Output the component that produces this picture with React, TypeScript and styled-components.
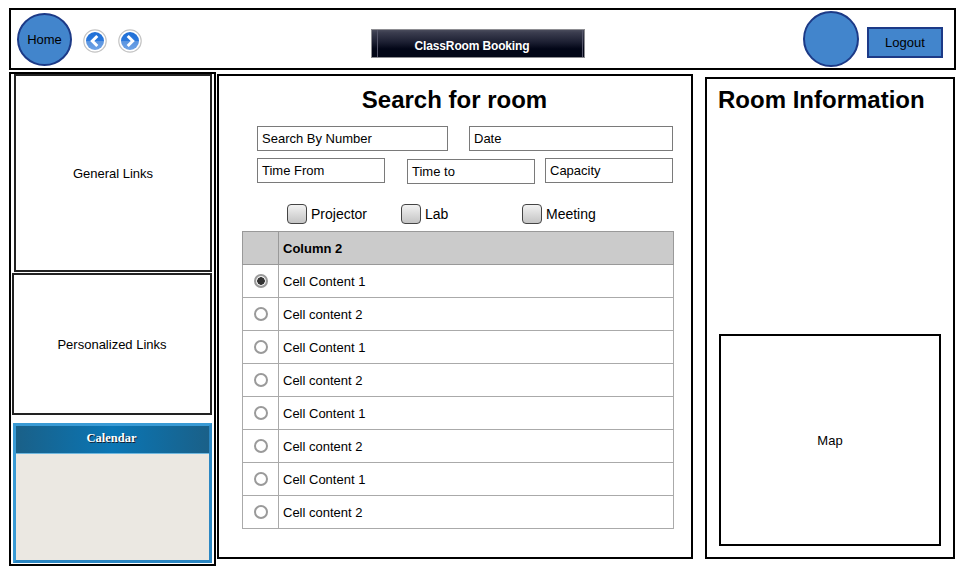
import { createGlobalStyle, styled } from 'styled-components';

const GlobalStyle = createGlobalStyle`
  html, body {
    margin: 0;
    padding: 0;
    background: #fff;
  }
  body {
    font-family: "Liberation Sans", Arial, sans-serif;
    color: #000;
  }
`;

const rows = [
  'Cell Content 1',
  'Cell content 2',
  'Cell Content 1',
  'Cell content 2',
  'Cell Content 1',
  'Cell content 2',
  'Cell Content 1',
  'Cell content 2',
];

const BackIcon = ({ flip }: { flip?: boolean }) => (
  <svg width="24" height="24" viewBox="0 0 24 24" style={flip ? { transform: 'scaleX(-1)' } : undefined}>
    <defs>
      <linearGradient id={flip ? 'navF' : 'navB'} x1="0" y1="0" x2="0" y2="1">
        <stop offset="0" stopColor="#1f6fd6" />
        <stop offset="0.5" stopColor="#2a78dc" />
        <stop offset="0.52" stopColor="#5a94e0" />
        <stop offset="1" stopColor="#6fa3e6" />
      </linearGradient>
    </defs>
    <circle cx="12" cy="12" r="11.2" fill="#fff" stroke="#c4c4c4" strokeWidth="1.2" />
    <circle cx="12" cy="12" r="9" fill={`url(#${flip ? 'navF' : 'navB'})`} />
    <path d="M14.3 7 L9.3 12 L14.3 17" fill="none" stroke="#fff" strokeWidth="3" />
  </svg>
);

const App = () => {
  return (
    <Page>
      <GlobalStyle />
      <Header>
        <HeaderLeft>
          <HomeButton>Home</HomeButton>
          <NavIcons>
            <BackIcon />
            <BackIcon flip />
          </NavIcons>
        </HeaderLeft>
        <TitleBar>ClassRoom Booking</TitleBar>
        <HeaderRight>
          <Avatar />
          <LogoutButton>Logout</LogoutButton>
        </HeaderRight>
      </Header>

      <Main>
        <LeftColumn>
          <GeneralLinks>General Links</GeneralLinks>
          <PersonalLinks>Personalized Links</PersonalLinks>
          <Calendar>
            <CalendarHead>Calendar</CalendarHead>
            <CalendarBody />
          </Calendar>
        </LeftColumn>

        <SearchPanel>
          <SearchTitle>Search for room</SearchTitle>
          <FieldRow>
            <Field $width={191}>Search By Number</Field>
            <Field $width={204} $left={21}>Date</Field>
          </FieldRow>
          <FieldRow $top={7}>
            <Field $width={128}>Time From</Field>
            <Field $width={128} $left={22} $drop={1}>Time to</Field>
            <Field $width={128} $left={10}>Capacity</Field>
          </FieldRow>
          <CheckRow>
            <CheckItem $width={114}><CheckBox />Projector</CheckItem>
            <CheckItem $width={121}><CheckBox />Lab</CheckItem>
            <CheckItem><CheckBox />Meeting</CheckItem>
          </CheckRow>
          <RoomTable>
            <thead>
              <tr>
                <HeadCell />
                <HeadCell>Column 2</HeadCell>
              </tr>
            </thead>
            <tbody>
              {rows.map((text, i) => (
                <tr key={i}>
                  <RadioCell><Radio $checked={i === 0} /></RadioCell>
                  <BodyCell>{text}</BodyCell>
                </tr>
              ))}
            </tbody>
          </RoomTable>
        </SearchPanel>

        <InfoPanel>
          <InfoTitle>Room Information</InfoTitle>
          <MapBox>Map</MapBox>
        </InfoPanel>
      </Main>
    </Page>
  );
};

export default App;

const Page = styled.div`
  width: 968px;
  height: 570px;
  padding: 8px 0 0 9px;
  box-sizing: border-box;
  overflow: hidden;
`;

const Header = styled.header`
  width: 947px;
  height: 62px;
  box-sizing: border-box;
  border: 2px solid #000;
  display: flex;
  align-items: center;
  position: relative;
  justify-content: space-between;
`;

const HeaderLeft = styled.div`
  display: flex;
  align-items: center;
  padding-left: 6px;
`;

const HomeButton = styled.div`
  width: 55px;
  height: 53px;
  box-sizing: border-box;
  border: 2px solid #1c3a87;
  border-radius: 50%;
  background: #4285cc;
  display: flex;
  align-items: center;
  justify-content: center;
  font-size: 13px;
`;

const NavIcons = styled.div`
  display: flex;
  gap: 11px;
  margin-left: 11px;
  padding-top: 4px;
`;

const TitleBar = styled.div`
  width: 214px;
  height: 29px;
  box-sizing: border-box;
  border: 1px solid #8d8d92;
  background: linear-gradient(#4a4c5c 0, #3a3c4e 10%, #1c1f32 45%, #020617 70%, #020617 100%);
  color: #fff;
  font-size: 12px;
  font-weight: bold;
  letter-spacing: -0.15px;
  display: flex;
  align-items: center;
  justify-content: center;
  padding: 4px 12px 0 0;
  position: absolute;
  left: 360px;
  top: 19px;

  &::before,
  &::after {
    content: '';
    position: absolute;
    top: 0;
    bottom: 0;
    width: 1px;
    background: #55566a;
  }
  &::before {
    left: 5px;
  }
  &::after {
    right: 1px;
  }
`;

const HeaderRight = styled.div`
  display: flex;
  align-items: center;
  padding-right: 11px;
`;

const Avatar = styled.div`
  width: 56px;
  height: 56px;
  box-sizing: border-box;
  border: 2px solid #1c3a87;
  border-radius: 50%;
  background: #4285cc;
`;

const LogoutButton = styled.div`
  width: 76px;
  height: 31px;
  margin-left: 8px;
  margin-top: 6px;
  box-sizing: border-box;
  border: 2px solid #1c3a87;
  background: #4285cc;
  font-size: 13px;
  display: flex;
  align-items: center;
  justify-content: center;
`;

const Main = styled.main`
  display: flex;
  align-items: flex-start;
  margin-top: 2px;
`;

const LeftColumn = styled.aside`
  width: 207px;
  height: 494px;
  box-sizing: border-box;
  border: 2px solid #000;
  display: flex;
  flex-direction: column;
`;

const LinkBox = styled.div`
  box-sizing: border-box;
  border: 2px solid #222;
  display: flex;
  align-items: center;
  justify-content: center;
  font-size: 13px;
`;

const GeneralLinks = styled(LinkBox)`
  width: 198px;
  height: 198px;
  margin-left: 3px;
`;

const PersonalLinks = styled(LinkBox)`
  width: 200px;
  height: 142px;
  margin: 1px 0 0 1px;
`;

const Calendar = styled.div`
  width: 199px;
  height: 140px;
  margin: 8px 0 0 2px;
  box-sizing: border-box;
  border: 3px solid #3a9bd5;
  border-bottom-color: #2a86c2;
  border-right-color: #2a86c2;
  display: flex;
  flex-direction: column;
`;

const CalendarHead = styled.div`
  height: 28px;
  padding-right: 2px;
  background: linear-gradient(90deg, #1a6088, #0a76b5 50%, #1a6088);
  color: #fff;
  font-family: "Liberation Serif", "Times New Roman", serif;
  font-size: 12.5px;
  font-weight: bold;
  text-align: center;
  line-height: 24px;
  text-shadow: 1px 1px 0 #123;
  border-bottom: 1px solid #6fb7de;
  box-sizing: border-box;
`;

const CalendarBody = styled.div`
  flex: 1;
  background: #ebe8e2;
`;

const SearchPanel = styled.section`
  width: 476px;
  height: 485px;
  margin: 2px 0 0 1px;
  box-sizing: border-box;
  border: 2px solid #000;
  padding: 0 18px 0 23px;
`;

const SearchTitle = styled.h1`
  margin: 0;
  font-size: 24px;
  font-weight: bold;
  text-align: center;
  line-height: 28px;
  padding: 10px 6px 0 0;
  height: 50px;
  box-sizing: border-box;
`;

const FieldRow = styled.div<{ $top?: number }>`
  display: flex;
  align-items: flex-start;
  padding-left: 15px;
  margin-top: ${(p) => p.$top ?? 0}px;
  height: 25px;
`;

const Field = styled.div<{ $width: number; $left?: number; $drop?: number }>`
  width: ${(p) => p.$width}px;
  height: 25px;
  margin-left: ${(p) => p.$left ?? 0}px;
  margin-top: ${(p) => p.$drop ?? 0}px;
  box-sizing: border-box;
  border: 1px solid #7a7a7a;
  font-size: 13px;
  line-height: 23px;
  padding-left: 4px;
`;

const CheckRow = styled.div`
  display: flex;
  align-items: center;
  margin-top: 20px;
  padding-left: 45px;
  height: 22px;
`;

const CheckItem = styled.label<{ $width?: number }>`
  display: flex;
  align-items: center;
  width: ${(p) => (p.$width ? `${p.$width}px` : 'auto')};
  font-size: 14px;
`;

const CheckBox = styled.span`
  width: 20px;
  height: 20px;
  margin-right: 4px;
  box-sizing: border-box;
  border: 1px solid #444;
  border-radius: 4px;
  background: linear-gradient(#f2f2f2, #c4c4c4);
  display: block;
`;

const RoomTable = styled.table`
  width: 432px;
  margin-top: 6px;
  border-collapse: collapse;
  table-layout: fixed;
  font-size: 13px;
`;

const HeadCell = styled.th`
  height: 32px;
  padding: 0 0 0 4px;
  background: #cbcbcb;
  border: 1px solid #999;
  text-align: left;
  font-size: 13px;
  &:first-child {
    width: 35px;
    padding: 0;
  }
`;

const BodyCell = styled.td`
  height: 32px;
  padding: 0 0 0 4px;
  border: 1px solid #aaa;
`;

const RadioCell = styled(BodyCell)`
  padding: 0;
  line-height: 0;
`;

const Radio = styled.span<{ $checked?: boolean }>`
  display: block;
  width: 14px;
  height: 14px;
  margin: 0 auto 1px;
  box-sizing: border-box;
  border-radius: 50%;
  border: 2px solid #9a9a9a;
  background: ${(p) => (p.$checked ? 'radial-gradient(circle, #333 0 3.5px, #eee 4px)' : '#fff')};
`;

const InfoPanel = styled.section`
  width: 250px;
  height: 482px;
  margin: 5px 0 0 12px;
  box-sizing: border-box;
  border: 2px solid #000;
  padding: 0 12px 0 11px;
`;

const InfoTitle = styled.h2`
  margin: 0;
  font-size: 24px;
  font-weight: bold;
  line-height: 28px;
  padding-top: 7px;
  height: 255px;
  box-sizing: border-box;
`;

const MapBox = styled.div`
  width: 222px;
  height: 212px;
  margin-left: 1px;
  box-sizing: border-box;
  border: 2px solid #000;
  display: flex;
  align-items: center;
  justify-content: center;
  font-size: 13px;
`;
